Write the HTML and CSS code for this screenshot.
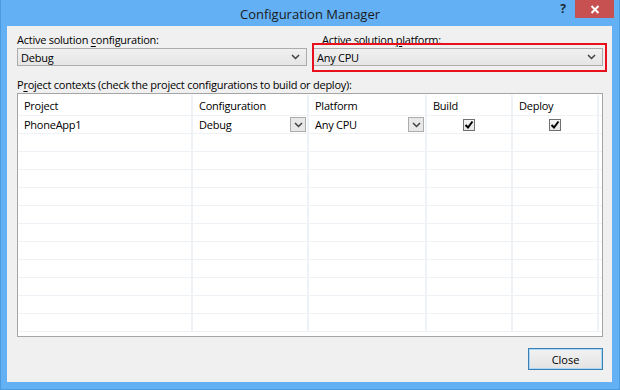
FILE: index.html
```html
<!DOCTYPE html>
<html lang="en">
  <head>
    <meta charset="UTF-8" />
    <title>Configuration Manager</title>
    <link rel="stylesheet" href="styles.css">
  </head>
  <body>
    <div class="window">
      <div class="titlebar">
        <div></div>
        <div class="title">Configuration Manager</div>
        <div class="caption-buttons">
          <span class="help">?</span>
          <span class="close-x">
            <svg width="10" height="9" viewBox="0 0 10 9">
              <path d="M1.5 1 L8.5 8 M8.5 1 L1.5 8" stroke="#fff" stroke-width="2" />
            </svg>
          </span>
        </div>
      </div>

      <div class="client">
        <div class="solution">
          <div class="field">
            <label>Active solution <u>c</u>onfiguration:</label>
            <div class="combo">
              <span>Debug</span>
              <svg class="chev" width="9" height="6" viewBox="0 0 9 6"><path d="M1 1 L4.5 4.5 L8 1" fill="none" stroke="#404040" stroke-width="1.5" /></svg>
            </div>
          </div>
          <div class="field platform">
            <label>Active solution <u>p</u>latform:</label>
            <div class="combo">
              <span>Any CPU</span>
              <svg class="chev" width="9" height="6" viewBox="0 0 9 6"><path d="M1 1 L4.5 4.5 L8 1" fill="none" stroke="#404040" stroke-width="1.5" /></svg>
            </div>
            <div class="highlight"></div>
          </div>
        </div>

        <div class="contexts-label">P<u>r</u>oject contexts (check the project configurations to build or deploy):</div>

        <div class="grid">
          <div class="row head">
            <div class="cell">Project</div>
            <div class="cell">Configuration</div>
            <div class="cell">Platform</div>
            <div class="cell">Build</div>
            <div class="cell">Deploy</div>
            <div class="cell"></div>
          </div>
          <div class="row">
            <div class="cell">PhoneApp1</div>
            <div class="cell drop">
              <span>Debug</span>
              <span class="drop-btn"><svg width="9" height="6" viewBox="0 0 9 6"><path d="M1 1 L4.5 4.5 L8 1" fill="none" stroke="#404040" stroke-width="1.5" /></svg></span>
            </div>
            <div class="cell drop">
              <span>Any CPU</span>
              <span class="drop-btn"><svg width="9" height="6" viewBox="0 0 9 6"><path d="M1 1 L4.5 4.5 L8 1" fill="none" stroke="#404040" stroke-width="1.5" /></svg></span>
            </div>
            <div class="cell center">
              <span class="check"><svg width="10" height="10" viewBox="0 0 10 10"><path d="M1.5 5 L4 7.5 L8.5 1.5" fill="none" stroke="#000" stroke-width="2" /></svg></span>
            </div>
            <div class="cell center">
              <span class="check"><svg width="10" height="10" viewBox="0 0 10 10"><path d="M1.5 5 L4 7.5 L8.5 1.5" fill="none" stroke="#000" stroke-width="2" /></svg></span>
            </div>
            <div class="cell"></div>
          </div>
          <div class="row"><div class="cell"></div><div class="cell"></div><div class="cell"></div><div class="cell"></div><div class="cell"></div><div class="cell"></div></div>
          <div class="row"><div class="cell"></div><div class="cell"></div><div class="cell"></div><div class="cell"></div><div class="cell"></div><div class="cell"></div></div>
          <div class="row"><div class="cell"></div><div class="cell"></div><div class="cell"></div><div class="cell"></div><div class="cell"></div><div class="cell"></div></div>
          <div class="row"><div class="cell"></div><div class="cell"></div><div class="cell"></div><div class="cell"></div><div class="cell"></div><div class="cell"></div></div>
          <div class="row"><div class="cell"></div><div class="cell"></div><div class="cell"></div><div class="cell"></div><div class="cell"></div><div class="cell"></div></div>
          <div class="row"><div class="cell"></div><div class="cell"></div><div class="cell"></div><div class="cell"></div><div class="cell"></div><div class="cell"></div></div>
          <div class="row"><div class="cell"></div><div class="cell"></div><div class="cell"></div><div class="cell"></div><div class="cell"></div><div class="cell"></div></div>
          <div class="row"><div class="cell"></div><div class="cell"></div><div class="cell"></div><div class="cell"></div><div class="cell"></div><div class="cell"></div></div>
          <div class="row"><div class="cell"></div><div class="cell"></div><div class="cell"></div><div class="cell"></div><div class="cell"></div><div class="cell"></div></div>
          <div class="row"><div class="cell"></div><div class="cell"></div><div class="cell"></div><div class="cell"></div><div class="cell"></div><div class="cell"></div></div>
          <div class="row"><div class="cell"></div><div class="cell"></div><div class="cell"></div><div class="cell"></div><div class="cell"></div><div class="cell"></div></div>
        </div>

        <div class="footer">
          <button class="btn">Close</button>
        </div>
      </div>
    </div>
  </body>
</html>
```

FILE: styles.css
```css
* {
  box-sizing: border-box;
  font-family: "Open Sans", "Noto Sans", sans-serif;
}

body {
  margin: 0;
}

u {
  text-decoration: underline;
  text-underline-offset: 2px;
}

.window {
  width: 620px;
  height: 390px;
  display: flex;
  flex-direction: column;
  background: #63b0f4;
  border: 1px solid #4c9be0;
  border-top: none;
}

/* Title bar */
.titlebar {
  height: 26px;
  display: grid;
  grid-template-columns: 1fr auto 1fr;
}

.title {
  font-size: 13px;
  color: #1a1a1a;
  line-height: 26px;
  padding-top: 1px;
}

.caption-buttons {
  display: flex;
  justify-content: flex-end;
  align-items: flex-start;
  padding-right: 5px;
}

.help {
  font-size: 12px;
  font-weight: bold;
  color: #1c2a38;
  line-height: 18px;
  margin-right: 9px;
}

.close-x {
  width: 39px;
  height: 18px;
  background: #c75050;
  display: flex;
  align-items: center;
  justify-content: center;
}

/* Client area */
.client {
  flex: 1;
  margin: 0 7px 7px 6px;
  background: #f0f0f0;
  padding: 6px 9px 0 10px;
  display: flex;
  flex-direction: column;
  font-size: 11px;
  letter-spacing: -0.25px;
  color: #000;
}

.solution {
  display: grid;
  grid-template-columns: 290px 290px;
  column-gap: 6px;
}

.field {
  position: relative;
  display: flex;
  flex-direction: column;
}

.field label {
  line-height: 16px;
  height: 16px;
}

.platform label {
  padding-left: 9px;
}

.combo {
  height: 18px;
  border: 1px solid #acacac;
  background: linear-gradient(#f0f0f0, #e5e5e5);
  display: flex;
  align-items: center;
  justify-content: space-between;
  padding: 0 6px 0 3px;
}

.highlight {
  position: absolute;
  left: -1px;
  right: -4px;
  top: 11px;
  height: 29px;
  border: 2px solid #e8101c;
}

.contexts-label {
  margin-top: 9px;
  padding-top: 1px;
  line-height: 17px;
  height: 18px;
}

/* Project grid */
.grid {
  height: 244px;
  overflow: hidden;
  border: 1px solid #a5a5a5;
  background: #fff;
  display: flex;
  flex-direction: column;
}

.row {
  display: grid;
  grid-template-columns: 175px 116px 118px 86px 86px 1fr;
  height: 18px;
  flex-shrink: 0;
  border-bottom: 1px solid #eef1f5;
}

.row.head {
  height: 22px;
  padding-top: 1px;
}

.cell {
  border-right: 2px solid #eef1f5;
  display: flex;
  align-items: center;
  padding-left: 6px;
  line-height: 17px;
}

.cell:last-child {
  border-right: none;
}

.drop {
  justify-content: space-between;
  padding-right: 1px;
}

.drop-btn {
  width: 16px;
  height: 15px;
  border: 1px solid #acacac;
  background: #e8e8e8;
  display: flex;
  align-items: center;
  justify-content: center;
}

.center {
  justify-content: center;
  padding-left: 0;
}

.check {
  width: 12px;
  height: 12px;
  border: 1px solid #707070;
  background: linear-gradient(#f4f4f4, #e6e6e6);
  display: flex;
  align-items: center;
  justify-content: center;
}

/* Footer */
.footer {
  display: flex;
  justify-content: flex-end;
  padding-top: 11px;
}

.btn {
  width: 75px;
  height: 22px;
  font-size: 11px;
  color: #000;
  border: 1px solid #3c7fb1;
  box-shadow: inset 0 0 0 1px #a9d8f8;
  background: linear-gradient(#f2f2f2, #e3e3e3);
  padding: 0;
}
```
